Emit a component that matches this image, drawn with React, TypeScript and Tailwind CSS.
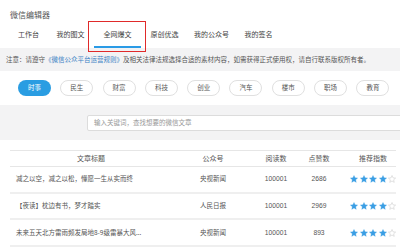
import React from "react";

const font = { fontFamily: '"Noto Sans CJK SC", "Noto Sans", sans-serif' };

function Star({ filled }: { filled: boolean }) {
  return (
    <svg width="8" height="8" viewBox="0 0 24 24">
      <polygon
        points="12,1.5 15.1,8.6 22.8,9.3 17,14.4 18.7,22 12,18 5.3,22 7,14.4 1.2,9.3 8.9,8.6"
        fill={filled ? "#3a9ee4" : "none"}
        stroke={filled ? "#3a9ee4" : "#c8c8c8"}
        strokeWidth={filled ? 1 : 1.6}
        strokeLinejoin="round"
      />
    </svg>
  );
}

const tabs = ["我的图文", "全网爆文", "原创优选", "我的公众号", "我的签名"];
const cats = ["时事", "民生", "财富", "科技", "创业", "汽车", "楼市", "职场", "教育"];
const rows = [
  { t: "减之以空，减之以松，懂愿一生从实而终", s: "央视新闻", r: "100001", l: "2686" },
  { t: "【夜读】枕边有书，梦才踏实", s: "人民日报", r: "100001", l: "2969" },
  { t: "未来五天北方雷雨频发局地8-9级雷暴大风...", s: "央视新闻", r: "100001", l: "893" },
];

export default function App() {
  return (
    <div className="w-[400px] h-[249px] overflow-hidden bg-[#f3f3f4] relative text-[#555]" style={font}>
      {/* header */}
      <div className="h-[48px] bg-white relative">
        <div className="pl-[10px] pt-[10px] text-[8px] leading-[10px] text-[#555]">微信编辑器</div>
        <div className="flex h-[28px] items-center text-[7px] text-[#444]">
          <div className="ml-[10px] w-[37px] h-full flex items-center justify-center">工作台</div>
          {tabs.map((t, i) => (
            <div key={t} className="w-[47px] h-full flex items-center justify-center relative">
              <span>{t}</span>
              {i === 1 && <div className="absolute left-0 right-0 bottom-0 h-[2px] bg-[#2a9be6]" />}
            </div>
          ))}
        </div>
      </div>
      {/* notice */}
      <div className="h-[23px] flex items-center pl-[6px] text-[6.5px] text-[#555] whitespace-nowrap">
        注意：请遵守<span className="text-[#3c82c4]">《微信公众平台运营规则》</span>及相关法律法规选择合适的素材内容，如需获得正式使用权，请自行联系版权所有者。
      </div>
      {/* categories */}
      <div className="h-[34px] bg-white flex items-center pl-[18px] gap-[9.3px]">
        {cats.map((c, i) => (
          <div
            key={c}
            className={
              "w-[33px] h-[16px] rounded-full flex items-center justify-center text-[6.5px] shrink-0 " +
              (i === 0 ? "bg-[#2a9de2] text-white" : "border border-[#e0e0e0] text-[#555] bg-white")
            }
          >
            {c}
          </div>
        ))}
      </div>
      {/* search */}
      <div className="h-[35px] pt-[10px] pl-[87px]">
        <div className="w-[330px] h-[16px] bg-white border border-[#dcdcdc] rounded-[2px] flex items-center pl-[6px] text-[6.5px] text-[#999]">
          输入关键词，查找想要的微信文章
        </div>
      </div>
      {/* table */}
      <div className="bg-white pt-[10px] pl-[10px] h-[200px]">
        <div className="w-[386px] h-[17px] border-t border-b border-[#e6e6e6] grid grid-cols-[162px_82px_44px_42px_66px] items-center text-[7px] text-[#555]">
          <div className="text-center">文章标题</div>
          <div className="text-center">公众号</div>
          <div className="text-center">阅读数</div>
          <div className="text-center">点赞数</div>
          <div className="text-center">推荐指数</div>
        </div>
        {rows.map((r) => (
          <div
            key={r.t}
            className="w-[386px] h-[26.7px] border-b-2 border-[#efefef] grid grid-cols-[162px_82px_44px_42px_66px] items-center text-[6.5px] text-[#555]"
          >
            <div className="pl-[6px] whitespace-nowrap">{r.t}</div>
            <div className="text-center">{r.s}</div>
            <div className="text-center text-[6.7px]" style={{ fontFamily: '"Liberation Sans", sans-serif' }}>{r.r}</div>
            <div className="text-center text-[6.7px]" style={{ fontFamily: '"Liberation Sans", sans-serif' }}>{r.l}</div>
            <div className="flex justify-center gap-[1.5px]">
              <Star filled />
              <Star filled />
              <Star filled />
              <Star filled />
              <Star filled={false} />
            </div>
          </div>
        ))}
      </div>
      {/* red annotation box */}
      <div className="absolute left-[88px] top-[21px] w-[58px] h-[31px] border-[1.5px] border-[#e02a2a]" />
    </div>
  );
}
